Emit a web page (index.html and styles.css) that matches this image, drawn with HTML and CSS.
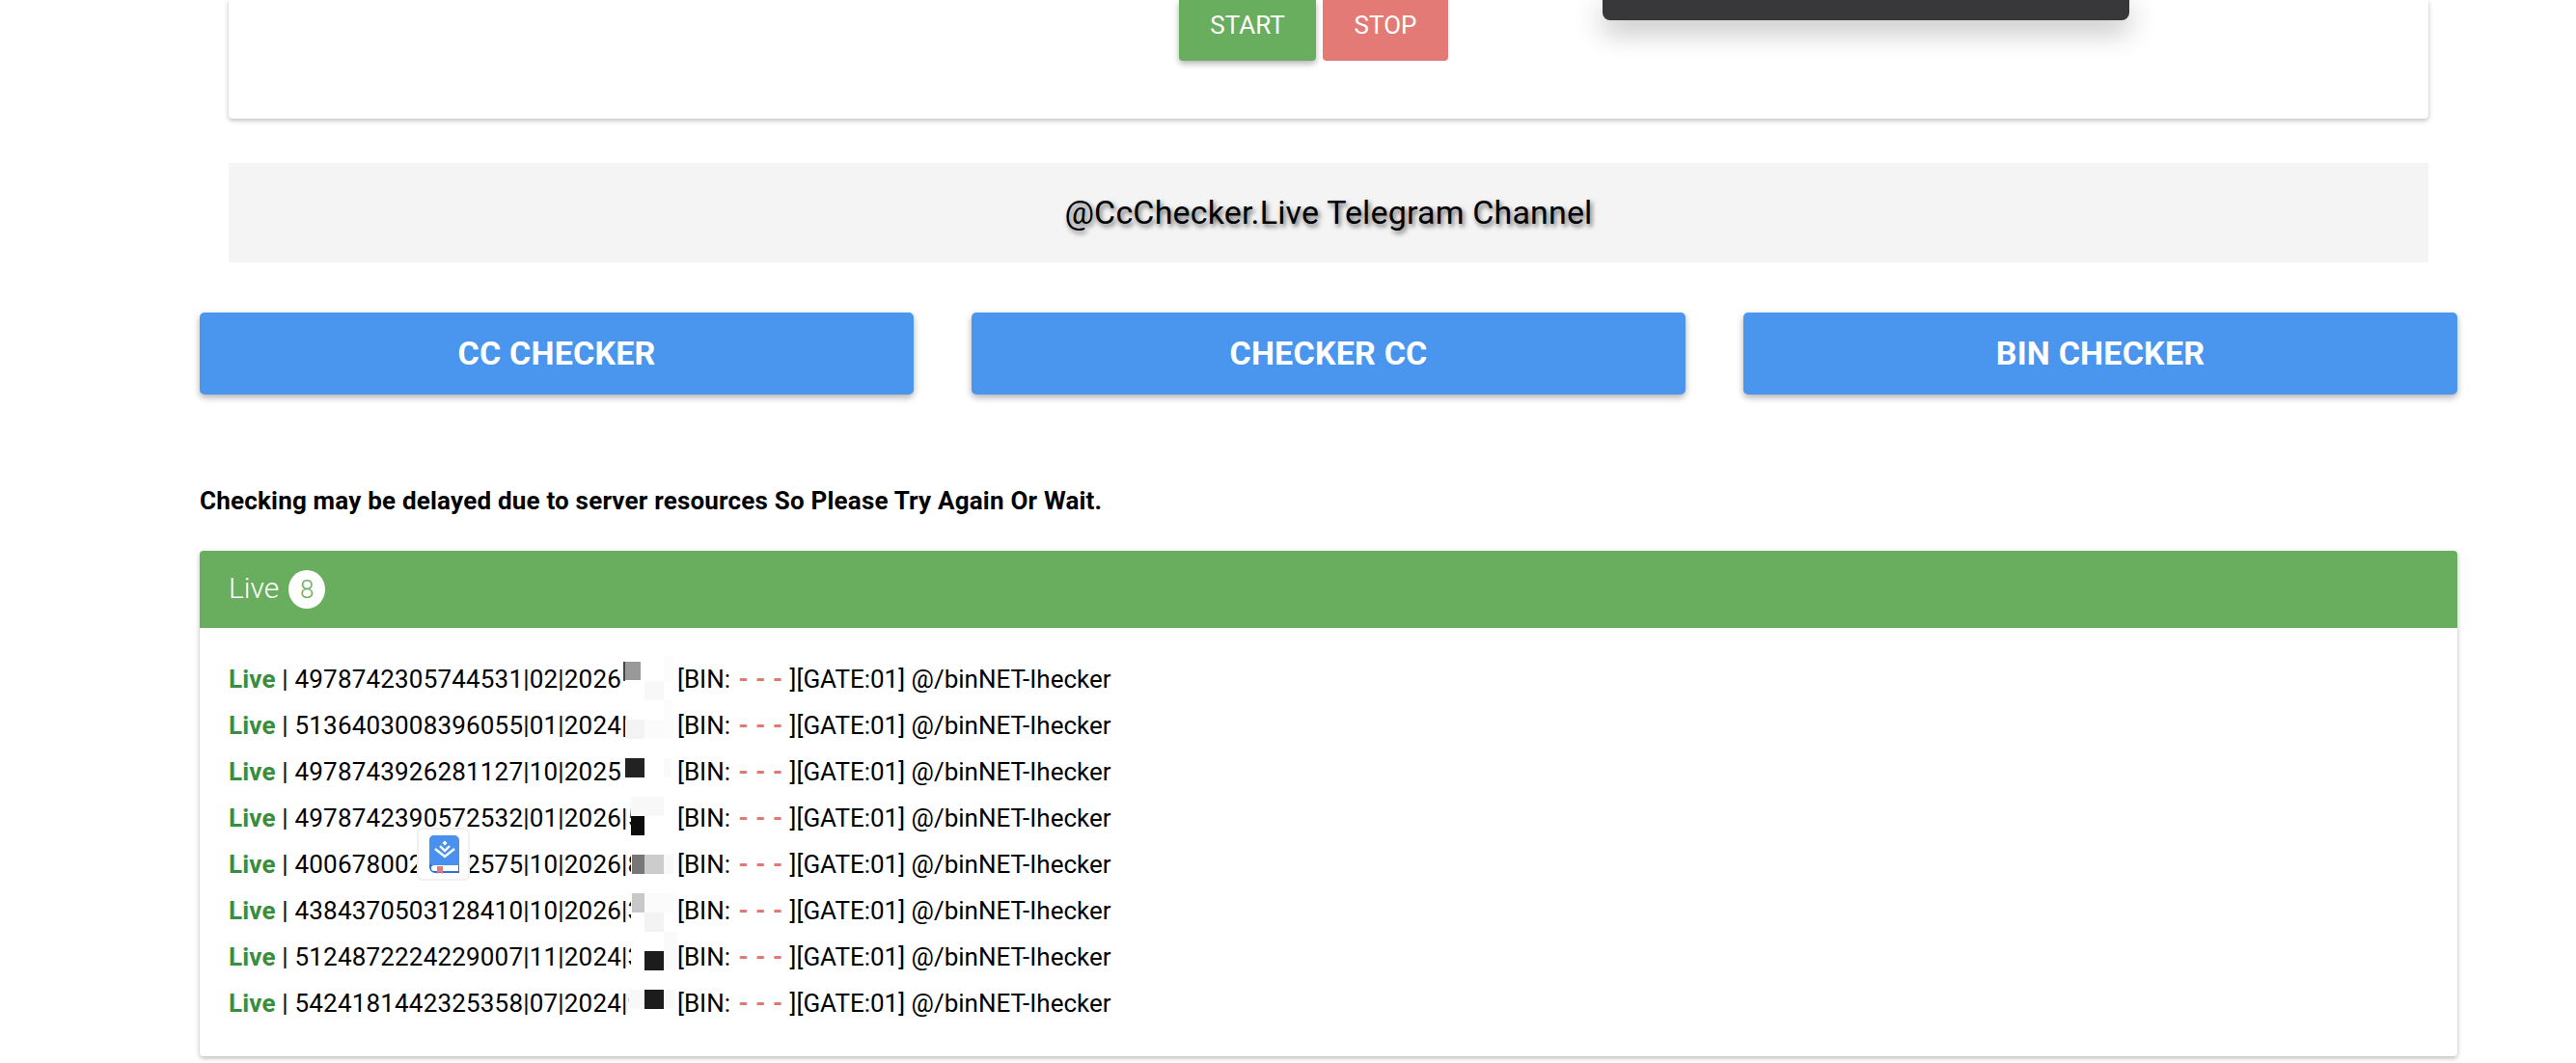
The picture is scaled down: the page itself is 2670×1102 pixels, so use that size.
FILE: index.html
```html
<!DOCTYPE html>
<html lang="en">
<head>
<meta charset="utf-8">
<title>CC Checker</title>
<link rel="stylesheet" href="styles.css">
</head>
<body>
<main class="page">
  <section class="top-card">
    <div class="actions">
      <button class="btn btn-start">START</button>
      <button class="btn btn-stop">STOP</button>
    </div>
    <div class="dark-panel"></div>
  </section>
  <div class="channel">@CcChecker.Live Telegram Channel</div>
  <nav class="links">
    <a class="link">CC CHECKER</a>
    <a class="link">CHECKER CC</a>
    <a class="link">BIN CHECKER</a>
  </nav>
  <p class="note">Checking may be delayed due to server resources So Please Try Again Or Wait.</p>
  <section class="result">
    <header class="result-head"><span class="head-title">Live</span><span class="badge">8</span></header>
    <div class="result-body">
      <div class="row"><span class="card-no"><b>Live</b> | 4978742305744531|02|2026</span><span>[BIN: <i>- - -</i> ][GATE:01] @/binNET-Ihecker</span></div>
      <div class="row"><span class="card-no"><b>Live</b> | 5136403008396055|01|2024|</span><span>[BIN: <i>- - -</i> ][GATE:01] @/binNET-Ihecker</span></div>
      <div class="row"><span class="card-no"><b>Live</b> | 4978743926281127|10|2025</span><span>[BIN: <i>- - -</i> ][GATE:01] @/binNET-Ihecker</span></div>
      <div class="row"><span class="card-no"><b>Live</b> | 4978742390572532|01|2026|5</span><span>[BIN: <i>- - -</i> ][GATE:01] @/binNET-Ihecker</span></div>
      <div class="row"><span class="card-no"><b>Live</b> | 4006780023902575|10|2026|8</span><span>[BIN: <i>- - -</i> ][GATE:01] @/binNET-Ihecker</span></div>
      <div class="row"><span class="card-no"><b>Live</b> | 4384370503128410|10|2026|3</span><span>[BIN: <i>- - -</i> ][GATE:01] @/binNET-Ihecker</span></div>
      <div class="row"><span class="card-no"><b>Live</b> | 5124872224229007|11|2024|3</span><span>[BIN: <i>- - -</i> ][GATE:01] @/binNET-Ihecker</span></div>
      <div class="row"><span class="card-no"><b>Live</b> | 5424181442325358|07|2024|9</span><span>[BIN: <i>- - -</i> ][GATE:01] @/binNET-Ihecker</span></div>
      <svg class="blotches" width="80" height="384" viewBox="640 670 80 384" aria-hidden="true">
        <rect x="654" y="823" width="20" height="231" fill="#fff"/>
        <rect x="688" y="680" width="10" height="26" fill="#fcfcfc"/>
        <rect x="668" y="706" width="20" height="20" fill="#f8f8f8"/>
        <rect x="688" y="726" width="10" height="40" fill="#fcfcfc"/>
        <rect x="646" y="686" width="2" height="20" fill="#444"/>
        <rect x="648" y="686" width="16" height="19" fill="#999"/>
        <rect x="648" y="746" width="20" height="20" fill="#f3f3f3"/>
        <rect x="668" y="746" width="20" height="20" fill="#fcfcfc"/>
        <rect x="648" y="786" width="20" height="20" fill="#222"/>
        <rect x="688" y="786" width="8" height="20" fill="#fafafa"/>
        <rect x="654" y="826" width="34" height="20" fill="#f8f8f8"/>
        <rect x="654" y="846" width="14" height="20" fill="#0c0c0c"/>
        <rect x="655" y="886" width="13" height="20" fill="#777"/>
        <rect x="668" y="886" width="20" height="20" fill="#ccc"/>
        <rect x="688" y="886" width="10" height="20" fill="#f8f8f8"/>
        <rect x="655" y="926" width="13" height="20" fill="#c8c8c8"/>
        <rect x="668" y="926" width="30" height="20" fill="#fbfbfb"/>
        <rect x="668" y="946" width="20" height="20" fill="#f3f3f3"/>
        <rect x="688" y="966" width="14" height="40" fill="#fafafa"/>
        <rect x="668" y="986" width="20" height="20" fill="#1c1c1c"/>
        <rect x="652" y="1026" width="16" height="20" fill="#f8f8f8"/>
        <rect x="688" y="1026" width="12" height="20" fill="#f8f8f8"/>
        <rect x="668" y="1026" width="20" height="20" fill="#1c1c1c"/>
      </svg>
      <div class="float-icon">
        <svg width="34" height="40" viewBox="0 0 34 40" aria-hidden="true">
          <path d="M6 0H28a5 5 0 0 1 5 5V31H3a3 3 0 0 0-1 1V5a5 5 0 0 1 4-5Z" fill="#4a90ee"/>
          <path d="M2 29a5 5 0 0 0 4 2H33V39H8a6 6 0 0 1-6-6Z" fill="#2f6fd8"/>
          <path d="M7 31H32V37H7a3 3 0 0 1 0-6Z" fill="#fff"/>
          <path d="M10 32H16V40L13 38L10 40Z" fill="#e57a76"/>
          <path d="M18 5.500l2.500 2.500-2.500 2.500-2.500-2.500Z" fill="#fff"/>
          <path d="M13 11l5 5 5-5M8 14l10 8 10-8" fill="none" stroke="#fff" stroke-width="2.400"/>
        </svg>
      </div>
    </div>
  </section>
</main>
</body>
</html>
```
FILE: styles.css
```css
* { box-sizing: border-box; }
html, body { margin: 0; height: 1102px; overflow: hidden; background: #fff; }
body { font-family: Roboto, "Liberation Sans", sans-serif; color: #000; }
.page { padding: 0 123px 0 207px; }

.top-card {
  position: relative;
  margin: 0 30px;
  height: 123px;
  padding-left: 985px;
  background: #fff;
  border-radius: 0 0 4px 4px;
  box-shadow: 0 2px 5px rgba(0,0,0,.26);
}
.actions { display: flex; gap: 7px; }
.btn {
  height: 63px;
  padding: 0 0 11px;
  border: 0;
  border-radius: 0 0 4px 4px;
  color: #fff;
  font: 400 26px/52px Roboto, sans-serif;
}
.btn-start { width: 142px; background: #69ad5f; box-shadow: 0 3px 6px rgba(0,0,0,.3); }
.btn-stop { width: 130px; background: #e47a76; }
.dark-panel {
  position: absolute;
  left: 1424px;
  top: 0;
  width: 546px;
  height: 21px;
  background: #38383a;
  border-radius: 0 0 8px 8px;
  box-shadow: 0 10px 30px rgba(0,0,0,.3);
}

.channel {
  margin: 46px 30px 0;
  height: 103px;
  background: #f4f4f4;
  text-align: center;
  font-size: 34px;
  letter-spacing: .16px;
  line-height: 103px;
  text-shadow: 2px 3px 5px rgba(0,0,0,.6);
}

.links { display: flex; gap: 60px; margin-top: 52px; }
.link {
  flex: 1;
  height: 85px;
  background: #4a95ed;
  border-radius: 5px;
  color: #fff;
  text-align: center;
  font-size: 34px;
  letter-spacing: .2px;
  font-weight: 700;
  line-height: 85px;
  box-shadow: 0 3px 7px rgba(0,0,0,.32);
}

.note {
  margin: 90px 0 32px;
  font-size: 26px;
  font-weight: 700;
  letter-spacing: .2px;
  line-height: 40px;
}

.result {
  height: 524px;
  background: #fff;
  border-radius: 4px;
  box-shadow: 0 2px 5px rgba(0,0,0,.28);
  overflow: hidden;
}
.result-head {
  display: flex;
  align-items: center;
  gap: 10px;
  height: 80px;
  padding-left: 30px;
  background: #69ad5f;
  color: #fff;
  font-size: 30px;
  font-weight: 300;
}
.head-title { margin-bottom: 3px; }
.badge {
  width: 38px;
  height: 40px;
  border-radius: 50%;
  background: #fff;
  color: #69ad5f;
  text-align: center;
  font-size: 26px;
  line-height: 40px;
}
.result-body { position: relative; padding: 29px 30px 31px; }
.row {
  display: flex;
  font-size: 26px;
  line-height: 48px;
  white-space: nowrap;
}
.card-no { width: 465px; letter-spacing: .18px; }
.card-no b { color: #388e3c; font-weight: 700; }
.row i { margin: 0 1px 0 2px; font-style: normal; font-weight: 700; word-spacing: 1px; color: #e57373; }

.blotches { position: absolute; left: 433px; top: 19px; }
.float-icon {
  position: absolute;
  left: 225px;
  top: 207px;
  display: flex;
  align-items: center;
  justify-content: center;
  width: 55px;
  height: 55px;
  background: #fff;
  border: 2px solid #f0f0f0;
  border-radius: 6px;
}
```
